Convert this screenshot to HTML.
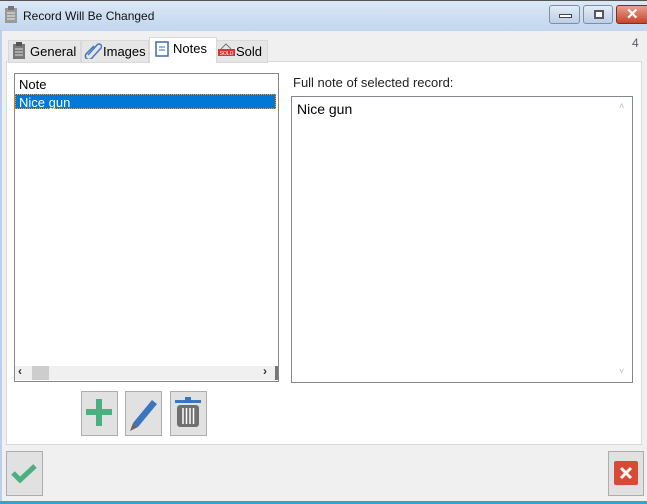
<!DOCTYPE html><html><head><style>
body{margin:0;width:647px;height:504px;overflow:hidden;font-family:"Liberation Sans",sans-serif;font-size:13px;background:#f0f0f0;position:relative}
.a{position:absolute}
</style></head><body>
<div class="a" style="left:0;top:0;width:647px;height:30px;background:linear-gradient(#dbe7f5,#c3d6ee);border-top:1px solid #555"></div>
<svg class="a" style="left:4px;top:6px" width="14" height="18"><rect x="1" y="2" width="12" height="15" fill="#999"/><rect x="4" y="0" width="6" height="4" fill="#777"/><g stroke="#eee"><line x1="3" y1="7" x2="11" y2="7"/><line x1="3" y1="10" x2="11" y2="10"/><line x1="3" y1="13" x2="11" y2="13"/></g></svg>
<div class="a" style="left:23px;top:9px;font-size:12px;color:#111">Record Will Be Changed</div>
<div class="a" style="left:549px;top:5px;width:29px;height:17px;border:1px solid #7c8fa8;border-radius:3px;background:linear-gradient(#e3ecf7,#bccde4)"><div class="a" style="left:9px;top:8px;width:11px;height:2px;background:#fff;border:1px solid #445"></div></div>
<div class="a" style="left:583px;top:5px;width:28px;height:17px;border:1px solid #7c8fa8;border-radius:3px;background:linear-gradient(#e3ecf7,#bccde4)"><div class="a" style="left:10px;top:4px;width:6px;height:5px;border:2px solid #556;background:#fff"></div></div>
<div class="a" style="left:616px;top:5px;width:31px;height:17px;border:1px solid #8a2a1a;border-radius:3px;background:linear-gradient(#e8a090,#c8442c)"><div class="a" style="left:9px;top:-1px;color:#fff;font-weight:bold;font-size:15px">✕</div></div>
<div class="a" style="left:632px;top:36px;font-size:12px;color:#557">4</div>
<div class="a" style="left:0;top:30px;width:2px;height:474px;background:#b9d1ee"></div>
<div class="a" style="left:6px;top:61px;width:634px;height:382px;background:#fff;border:1px solid #d9d9d9"></div>
<div class="a" style="left:8px;top:40px;width:71px;height:21px;background:#e6e6e6;border:1px solid #d9d9d9"></div>
<div class="a" style="left:81px;top:40px;width:66px;height:21px;background:#e6e6e6;border:1px solid #d9d9d9"></div>
<div class="a" style="left:149px;top:37px;width:66px;height:25px;background:#fff;border:1px solid #d9d9d9;border-bottom:none"></div>
<div class="a" style="left:216px;top:40px;width:50px;height:21px;background:#e6e6e6;border:1px solid #d9d9d9"></div>
<svg class="a" style="left:13px;top:42px" width="13" height="17"><rect x="0" y="2" width="12" height="15" fill="#777"/><rect x="3" y="0" width="6" height="4" fill="#555"/><g stroke="#ddd"><line x1="2" y1="7" x2="10" y2="7"/><line x1="2" y1="10" x2="10" y2="10"/><line x1="2" y1="13" x2="10" y2="13"/></g></svg>
<div class="a" style="left:30px;top:44px">General</div>
<svg class="a" style="left:84px;top:41px" width="18" height="18"><path d="M4 14 L13 4 a2.5 2.5 0 0 1 4 3 L8 17 a3.5 3.5 0 0 1 -6 -4 L10 5" fill="none" stroke="#4a7cc0" stroke-width="1.6"/></svg>
<div class="a" style="left:103px;top:44px">Images</div>
<svg class="a" style="left:155px;top:40px" width="14" height="17"><rect x="1" y="2" width="12" height="14" fill="#fff" stroke="#3a6ab0" stroke-width="1.5"/><g stroke="#3a6ab0"><line x1="4" y1="7" x2="10" y2="7"/><line x1="4" y1="10" x2="10" y2="10"/></g></svg>
<div class="a" style="left:173px;top:41px">Notes</div>
<svg class="a" style="left:218px;top:43px" width="17" height="14"><path d="M3 6 L8 1 L13 6" fill="none" stroke="#777"/><rect x="0" y="6" width="17" height="7" fill="#d33"/><text x="8.5" y="12" font-size="5" fill="#fff" text-anchor="middle" font-family="Liberation Sans">SOLD</text></svg>
<div class="a" style="left:236px;top:44px">Sold</div>
<div class="a" style="left:14px;top:73px;width:263px;height:307px;border:1px solid #828790;background:#fff"></div>
<div class="a" style="left:19px;top:77px">Note</div>
<div class="a" style="left:15px;top:94px;width:261px;height:15px;background:#0078d7;border:1px dotted #f0a030;box-sizing:border-box"></div>
<div class="a" style="left:19px;top:95px;color:#fff">Nice gun</div>
<div class="a" style="left:15px;top:366px;width:261px;height:14px;background:#f0f0f0"></div>
<div class="a" style="left:32px;top:366px;width:17px;height:14px;background:#cdcdcd"></div>
<div class="a" style="left:18px;top:364px;font-size:12px;font-weight:bold;color:#333">‹</div>
<div class="a" style="left:263px;top:364px;font-size:12px;font-weight:bold;color:#333">›</div>
<div class="a" style="left:275px;top:366px;width:3px;height:14px;background:#777"></div>
<div class="a" style="left:293px;top:75px;color:#222">Full note of selected record:</div>
<div class="a" style="left:291px;top:96px;width:340px;height:285px;border:1px solid #828790;background:#fff"></div>
<div class="a" style="left:297px;top:101px;font-size:14px">Nice gun</div>
<div class="a" style="left:619px;top:101px;font-size:9px;color:#bbb">˄</div>
<div class="a" style="left:619px;top:366px;font-size:9px;color:#bbb">˅</div>
<div class="a" style="left:81px;top:391px;width:35px;height:43px;border:1px solid #adadad;background:#e1e1e1"></div>
<svg class="a" style="left:86px;top:399px" width="26" height="28"><rect x="10" y="0" width="6" height="27" fill="#4caf82"/><rect x="0" y="10" width="26" height="6" fill="#4caf82"/></svg>
<div class="a" style="left:125px;top:391px;width:35px;height:43px;border:1px solid #adadad;background:#e1e1e1"></div>
<svg class="a" style="left:128px;top:397px" width="32" height="34"><path d="M5 26 L24 3 L29 7 L10 30 Z" fill="#3b75be"/><path d="M5 26 L10 30 L2 34 Z" fill="#666"/></svg>
<div class="a" style="left:170px;top:391px;width:35px;height:43px;border:1px solid #adadad;background:#e1e1e1"></div>
<svg class="a" style="left:175px;top:397px" width="26" height="32"><rect x="0" y="3" width="26" height="3" fill="#3b75be"/><rect x="10" y="0" width="6" height="3" fill="#3b75be"/><rect x="2" y="8" width="22" height="22" rx="3" fill="#707070"/><g stroke="#fff" stroke-width="1.5"><line x1="8" y1="11" x2="8" y2="27"/><line x1="11.5" y1="11" x2="11.5" y2="27"/><line x1="15" y1="11" x2="15" y2="27"/><line x1="18.5" y1="11" x2="18.5" y2="27"/></g></svg>
<div class="a" style="left:6px;top:451px;width:35px;height:43px;border:1px solid #adadad;background:#e1e1e1"></div>
<svg class="a" style="left:11px;top:463px" width="26" height="20"><path d="M2 10 L9 17 L24 3" fill="none" stroke="#4caf82" stroke-width="5"/></svg>
<div class="a" style="left:608px;top:451px;width:34px;height:43px;border:1px solid #adadad;background:#e1e1e1"></div>
<div class="a" style="left:614px;top:461px;width:24px;height:24px;background:#d84a35;border-radius:2px"><svg width="24" height="24"><path d="M7 7 L17 17 M17 7 L7 17" stroke="#fff" stroke-width="3"/></svg></div>
<div class="a" style="left:0;top:501px;width:647px;height:3px;background:#2aa6d6"></div>
</body></html>
